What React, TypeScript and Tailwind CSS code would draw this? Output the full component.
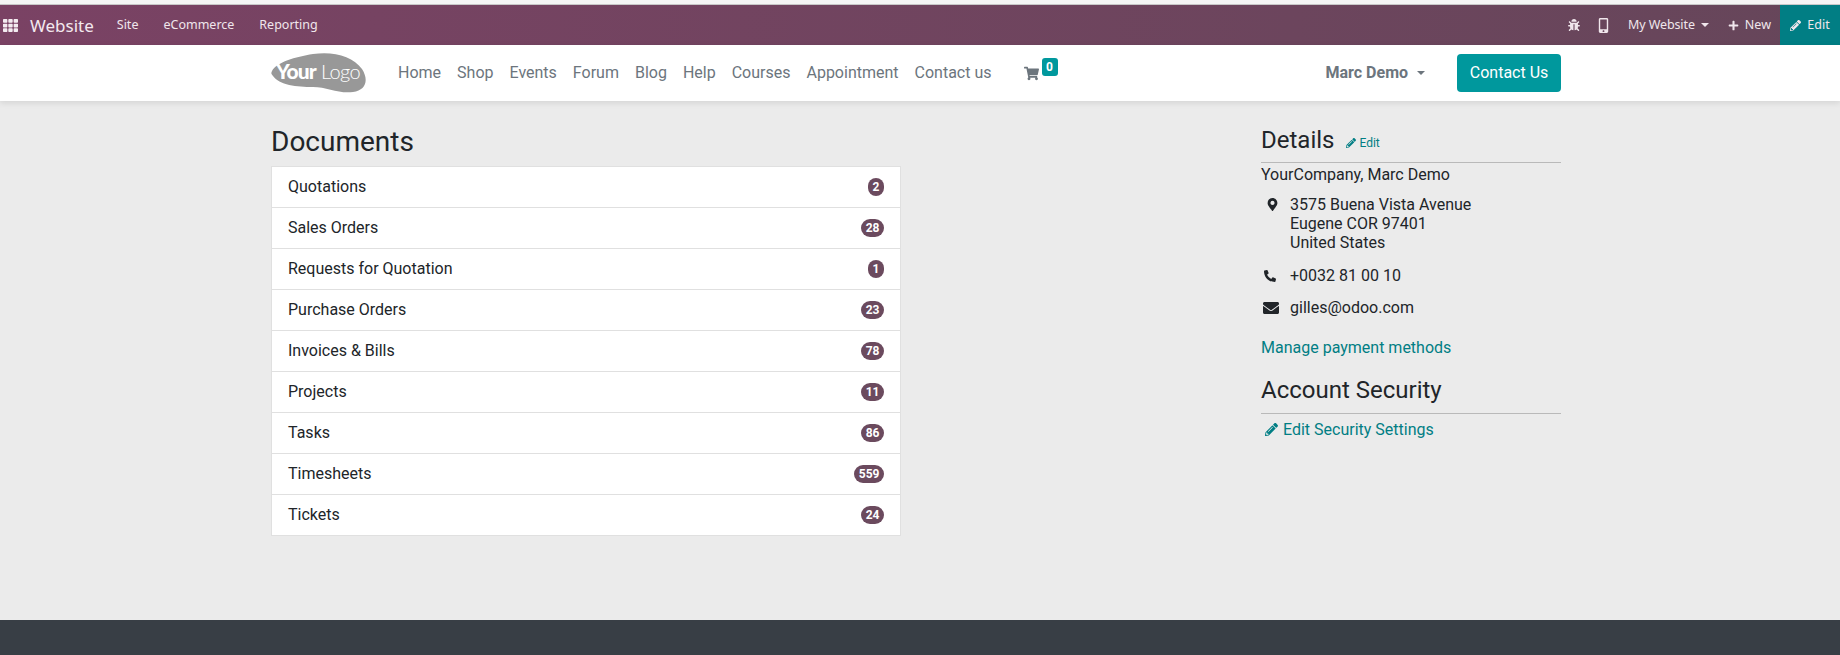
import { FaTh, FaBug, FaMobileAlt, FaPlus, FaPencilAlt, FaShoppingCart, FaMapMarkerAlt, FaPhoneAlt, FaEnvelope } from "react-icons/fa";

const documents = [
    ["Quotations", "2"],
    ["Sales Orders", "28"],
    ["Requests for Quotation", "1"],
    ["Purchase Orders", "23"],
    ["Invoices & Bills", "78"],
    ["Projects", "11"],
    ["Tasks", "86"],
    ["Timesheets", "559"],
    ["Tickets", "24"],
];

const navLinks = ["Home", "Shop", "Events", "Forum", "Blog", "Help", "Courses", "Appointment", "Contact us"];

function Caret({ className }: { className: string }) {
    return <span className={`inline-block border-x-[4px] border-t-[4px] border-x-transparent ${className}`} />;
}

function Logo() {
    return (
        <svg width="96" height="42" viewBox="0 0 96 42" className="shrink-0">
            <path d="M1 19 C6 10 24 5 42 2 C62 -1 82 4 91 17 C98 28 95 38 82 40 C68 42 56 35 42 35 C26 35 8 33 2 24 C0 22 0 21 1 19 Z" fill="#989898" />
            <text x="5" y="27" fill="#fff" fontFamily="Lato, sans-serif" fontWeight="900" fontSize="21" letterSpacing="-0.9">Your</text>
            <text x="50" y="27" fill="#fff" fontFamily="Lato, sans-serif" fontWeight="300" fontSize="20" letterSpacing="-0.6">Logo</text>
        </svg>
    );
}

export default function App() {
    return (
        <div className="h-[655px] flex flex-col overflow-hidden bg-[#ebebeb] font-['Roboto',sans-serif] text-[#212529]">
            <div className="h-[5px] bg-[#f5f5f5] border-b border-[#c8c8c8]" />

            <div className="h-[40px] flex items-center text-white font-['Noto_Sans',sans-serif] bg-gradient-to-r from-[#7a4264] to-[#66465a]">
                <FaTh className="ml-[3px] text-[15px] text-[#f4ecf1]" />
                <span className="ml-[12px] text-[17px] leading-none text-[#f3e9ef]">Website</span>
                <span className="ml-[23px] text-[12.5px] text-[#f0e6ec]">Site</span>
                <span className="ml-[25px] text-[12.5px] text-[#f0e6ec]">eCommerce</span>
                <span className="ml-[25px] text-[12.5px] text-[#f0e6ec]">Reporting</span>

                <div className="ml-auto flex items-center h-full text-[12.5px] text-[#f0e6ec]">
                    <FaBug className="text-[12px] mr-[16px]" />
                    <FaMobileAlt className="text-[15px] mr-[17px]" />
                    <span className="tracking-[-0.1px]">My Website</span>
                    <Caret className="border-t-[#f0e6ec] ml-[6px] mr-[19px]" />
                    <FaPlus className="text-[11px] mr-[6px]" />
                    <span className="mr-[9px]">New</span>
                    <div className="h-full w-[60px] flex items-center justify-center gap-[6px] bg-[#017e84]">
                        <FaPencilAlt className="text-[11px]" />
                        <span>Edit</span>
                    </div>
                </div>
            </div>

            <div className="relative h-[56px] shrink-0 bg-white shadow-[0_2px_6px_rgba(0,0,0,0.1)] pl-[271px] flex items-center">
                <Logo />
                <div className="ml-[31px] flex items-center gap-[16px] text-[16px] text-[#6c757d]">
                    {navLinks.map((link) => (
                        <span key={link}>{link}</span>
                    ))}
                </div>
                <div className="ml-[32px] relative flex items-center text-[#6c757d]">
                    <FaShoppingCart className="text-[15px]" />
                    <span className="absolute -top-[8px] left-[18px] h-[18px] min-w-[16px] rounded-[3px] bg-[#00989d] px-[4px] text-center text-[12px] leading-[18px] font-bold text-white">0</span>
                </div>
                <div className="ml-[287px] flex items-center font-bold text-[16px] text-[#6c757d]">
                    <span>Marc Demo</span>
                    <Caret className="border-t-[#6c757d] ml-[9px]" />
                </div>
                <div className="ml-[32px] w-[104px] h-[38px] rounded-[4px] bg-[#00989d] text-white text-[16px] flex items-center justify-center">Contact Us</div>
            </div>

            <main className="h-[519px] shrink-0 pl-[271px] flex items-start">
                <div className="w-[630px]">
                    <h3 className="mt-[24px] text-[28px] leading-[34px] mb-[7px]">Documents</h3>
                    <div className="bg-white border border-[#e0e0e0]">
                        {documents.map(([name, count]) => (
                            <div key={name} className="h-[41px] border-b border-[#e0e0e0] last:h-[40px] last:border-b-0 flex items-center justify-between px-[16px] text-[16px]">
                                <span>{name}</span>
                                <span className="h-[18px] min-w-[16px] rounded-full bg-[#6b4a5e] px-[4.5px] text-center text-[12px] leading-[18px] font-bold text-white">{count}</span>
                            </div>
                        ))}
                    </div>
                </div>

                <div className="ml-[360px] w-[300px] text-[16px]">
                    <div className="mt-[24px] flex items-baseline border-b border-[#b9b9b9] pt-[1px] h-[38px]">
                        <h4 className="text-[24px] leading-[28px]">Details</h4>
                        <span className="ml-[12px] flex items-center gap-[3px] text-[12px] text-[#017e84]">
                            <FaPencilAlt className="text-[10px]" />
                            Edit
                        </span>
                    </div>
                    <div className="mt-[2px] leading-[19px]">YourCompany, Marc Demo</div>
                    <div className="mt-[11px] flex leading-[19px]">
                        <div className="w-[29px] pl-[5px] pt-[3px]"><FaMapMarkerAlt className="text-[13px] text-[#212529]" /></div>
                        <div>
                            3575 Buena Vista Avenue<br />
                            Eugene COR 97401<br />
                            United States
                        </div>
                    </div>
                    <div className="mt-[14px] flex items-center leading-[19px]">
                        <div className="w-[29px] pl-[3px]"><FaPhoneAlt className="text-[12px]" /></div>
                        <span>+0032 81 00 10</span>
                    </div>
                    <div className="mt-[13px] flex items-center leading-[19px]">
                        <div className="w-[29px] pl-[2px]"><FaEnvelope className="text-[16px]" /></div>
                        <span>gilles@odoo.com</span>
                    </div>
                    <div className="mt-[21px] text-[#017e84] leading-[19px]">Manage payment methods</div>
                    <h4 className="mt-[19px] text-[24px] leading-[29px] pb-[8px] border-b border-[#b9b9b9]">Account Security</h4>
                    <div className="mt-[6px] flex items-center gap-[5px] pl-[4px] text-[#017e84] leading-[19px]">
                        <FaPencilAlt className="text-[13px]" />
                        <span>Edit Security Settings</span>
                    </div>
                </div>
            </main>

            <footer className="flex-1 bg-[#383e45]" />
        </div>
    );
}
